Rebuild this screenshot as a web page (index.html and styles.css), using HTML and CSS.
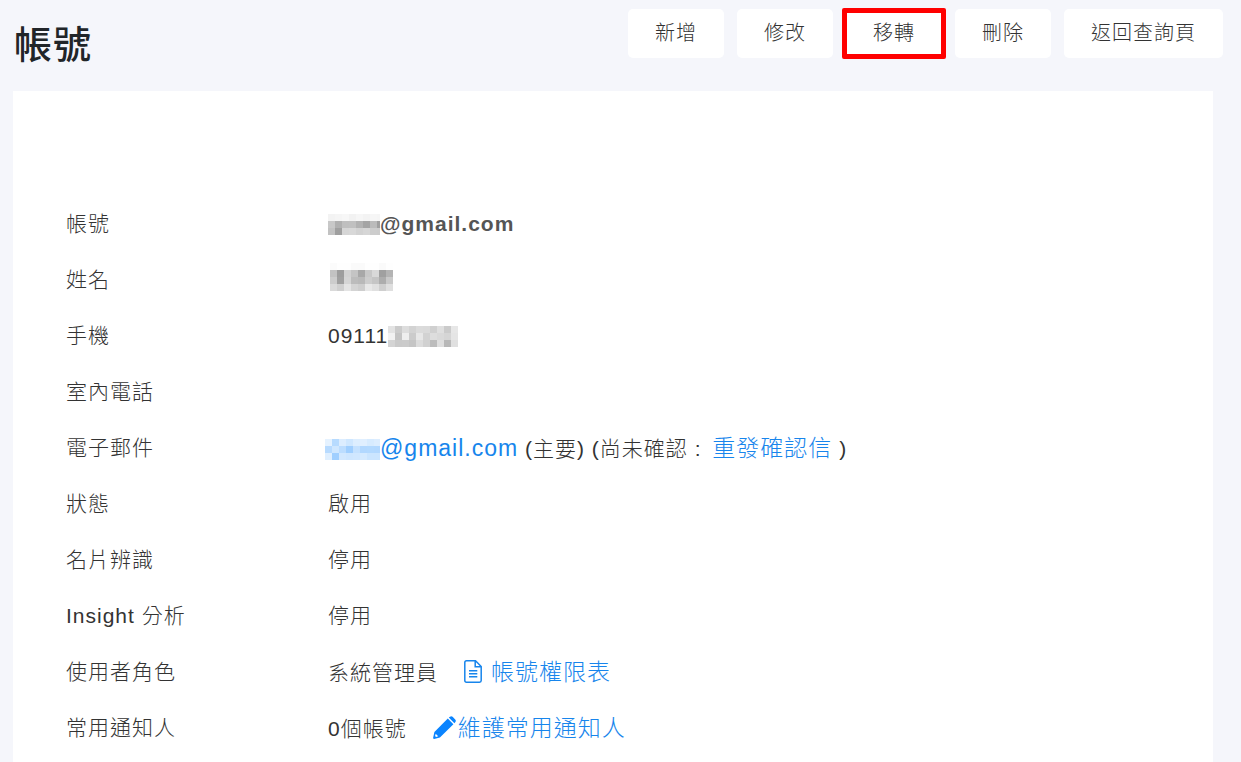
FILE: index.html
```html
<!DOCTYPE html>
<html lang="zh-Hant">
<head>
<meta charset="utf-8">
<meta name="viewport" content="width=device-width, initial-scale=1">
<title>帳號</title>
<link rel="stylesheet" href="styles.css">
</head>
<body>
<header class="page-header">
  <h1 class="title">帳號</h1>
  <div class="actions">
    <button type="button" class="btn">新增</button>
    <button type="button" class="btn">修改</button>
    <button type="button" class="btn marked">移轉</button>
    <button type="button" class="btn">刪除</button>
    <button type="button" class="btn">返回查詢頁</button>
  </div>
</header>
<main class="card">
  <dl class="details">
    <dt>帳號</dt>
    <dd class="strong"><svg class="mosaic" data-rows="f3f5f7f2f6f3f6f5 c8b0bfc0b2a4bba0 c29fd6d8d2d6cdcc" width="52" height="21" aria-hidden="true"></svg><span>@gmail.com</span></dd>
    <dt>姓名</dt>
    <dd><svg class="mosaic name" data-rows="fbfefefafafefefafe c29dd2c4a8c8d9a0b4 cca0d5bcb9cdc5adc9 dacfe4d4cee8e0cfdf" width="63" height="28" aria-hidden="true"></svg></dd>
    <dt>手機</dt>
    <dd><span>09111</span><svg class="mosaic" data-rows="e3cbddd3dbdad0dfcbe7 f2c4eecbe7d2ddd9d5e5 d4cacbc5dcd1bcdeb8e0" width="70" height="21" aria-hidden="true"></svg></dd>
    <dt>室內電話</dt>
    <dd></dd>
    <dt>電子郵件</dt>
    <dd><a class="link mail" href="#"><svg class="mosaic blue" data-rows="e5b7dccfdde0d7dc b8cfbca0c4b2b3b2 dfa0d2ced0d5cbcb" width="55" height="21" aria-hidden="true"></svg><span>@gmail.com</span></a> (主要) (尚未確認 : <a class="link resend" href="#">重發確認信</a> )</dd>
    <dt>狀態</dt>
    <dd>啟用</dd>
    <dt>名片辨識</dt>
    <dd>停用</dd>
    <dt>Insight 分析</dt>
    <dd>停用</dd>
    <dt>使用者角色</dt>
    <dd>系統管理員<a class="link spaced" href="#"><svg class="icon file" viewBox="0 0 18 23" aria-hidden="true"><path d="M2.500.8H11.500L17.200 6.500V20.500Q17.200 22.200 15.500 22.200H2.500Q.8 22.200.8 20.500V2.500Q.8.8 2.500.8ZM11.200 1V6.800H17M5 10.700H13.300M5 13.700H13.300M5 16.700H13.300"/></svg>帳號權限表</a></dd>
    <dt>常用通知人</dt>
    <dd>0個帳號<a class="link spaced" href="#"><svg class="icon pencil" viewBox="0 0 23 23" aria-hidden="true"><path d="M14.800 2.600L20.400 8.200L6.900 21.600L1.100 22.900Q0 23 .1 21.900L1.400 16ZM15.800 1.600L17 .7Q18.300-.3 19.600.8L22.200 3.400Q23.400 4.700 22.400 6L21.400 7.200Z"/><path class="tip" d="M2.700 17.800L5.200 20.300L3 20.900L2.100 20Z"/></svg>維護常用通知人</a></dd>
  </dl>
</main>
<script src="mosaic.js"></script>
</body>
</html>
```

FILE: styles.css
```css
* { box-sizing: border-box; }

body {
  margin: 0;
  min-height: 100vh;
  display: flex;
  flex-direction: column;
  background: #f5f6fb;
  color: #333;
  font-family: "Liberation Sans", "Noto Sans CJK TC", sans-serif;
  font-size: 21px;
  font-weight: 300;
  letter-spacing: 1px;
}

.page-header {
  display: flex;
  justify-content: space-between;
  align-items: flex-start;
  padding: 9px 18px 0 14px;
  height: 91px;
  flex: none;
}

.title {
  margin: 8px 0 0;
  font-size: 38px;
  line-height: 56px;
  font-weight: 500;
  color: #212529;
}

.actions { display: flex; gap: 13px; }

.btn {
  position: relative;
  height: 49px;
  padding: 0 27px 4px;
  border: 0;
  border-radius: 5px;
  background: #fff;
  color: #333;
  font: inherit;
  font-size: 20px;
  letter-spacing: inherit;
}

.marked::after {
  content: "";
  position: absolute;
  inset: -1px -4px;
  border: 5px solid #f00;
  border-radius: 2px;
}

.card {
  flex: 1;
  margin: 0 28px 0 13px;
  padding: 105px 53px 0;
  background: #fff;
}

.details {
  display: grid;
  grid-template-columns: 262px 1fr;
  grid-auto-rows: 56px;
  margin: 0;
  line-height: 56px;
  white-space: nowrap;
}

.details dd { margin: 0; }
.strong { font-weight: 700; color: #555; }

.link {
  color: #1785ec;
  font-size: 23px;
  text-decoration: none;
}
.spaced { margin-left: 26px; }
.resend { margin-left: 4px; }

.mosaic { vertical-align: -4px; }
.name { margin-left: 2px; }
.mail { margin-left: -3px; }

.icon { height: 23px; vertical-align: -3px; }
.file { width: 18px; margin-right: 9px; fill: none; stroke: #1785ec; stroke-width: 1.5; }
.pencil { width: 23px; margin-right: 2px; fill: #0a84ff; }
.tip { fill: #fff; }
```

FILE: mosaic.js
```js
// Fills each masked value with 7px tiles; every two hex digits give one tile's lightness.
document.querySelectorAll(".mosaic").forEach((svg) => {
  svg.dataset.rows.split(" ").forEach((row, y) => {
    row.match(/../g).forEach((hex, x) => {
      const tile = document.createElementNS("http://www.w3.org/2000/svg", "rect");
      const v = parseInt(hex, 16);
      tile.setAttribute("x", x * 7);
      tile.setAttribute("y", y * 7);
      tile.setAttribute("width", 7);
      tile.setAttribute("height", 7);
      tile.setAttribute("fill", svg.classList.contains("blue") ? `rgb(${v}, ${Math.round(v / 2 + 127)}, 255)` : `rgb(${v}, ${v}, ${v})`);
      svg.append(tile);
    });
  });
});
```
